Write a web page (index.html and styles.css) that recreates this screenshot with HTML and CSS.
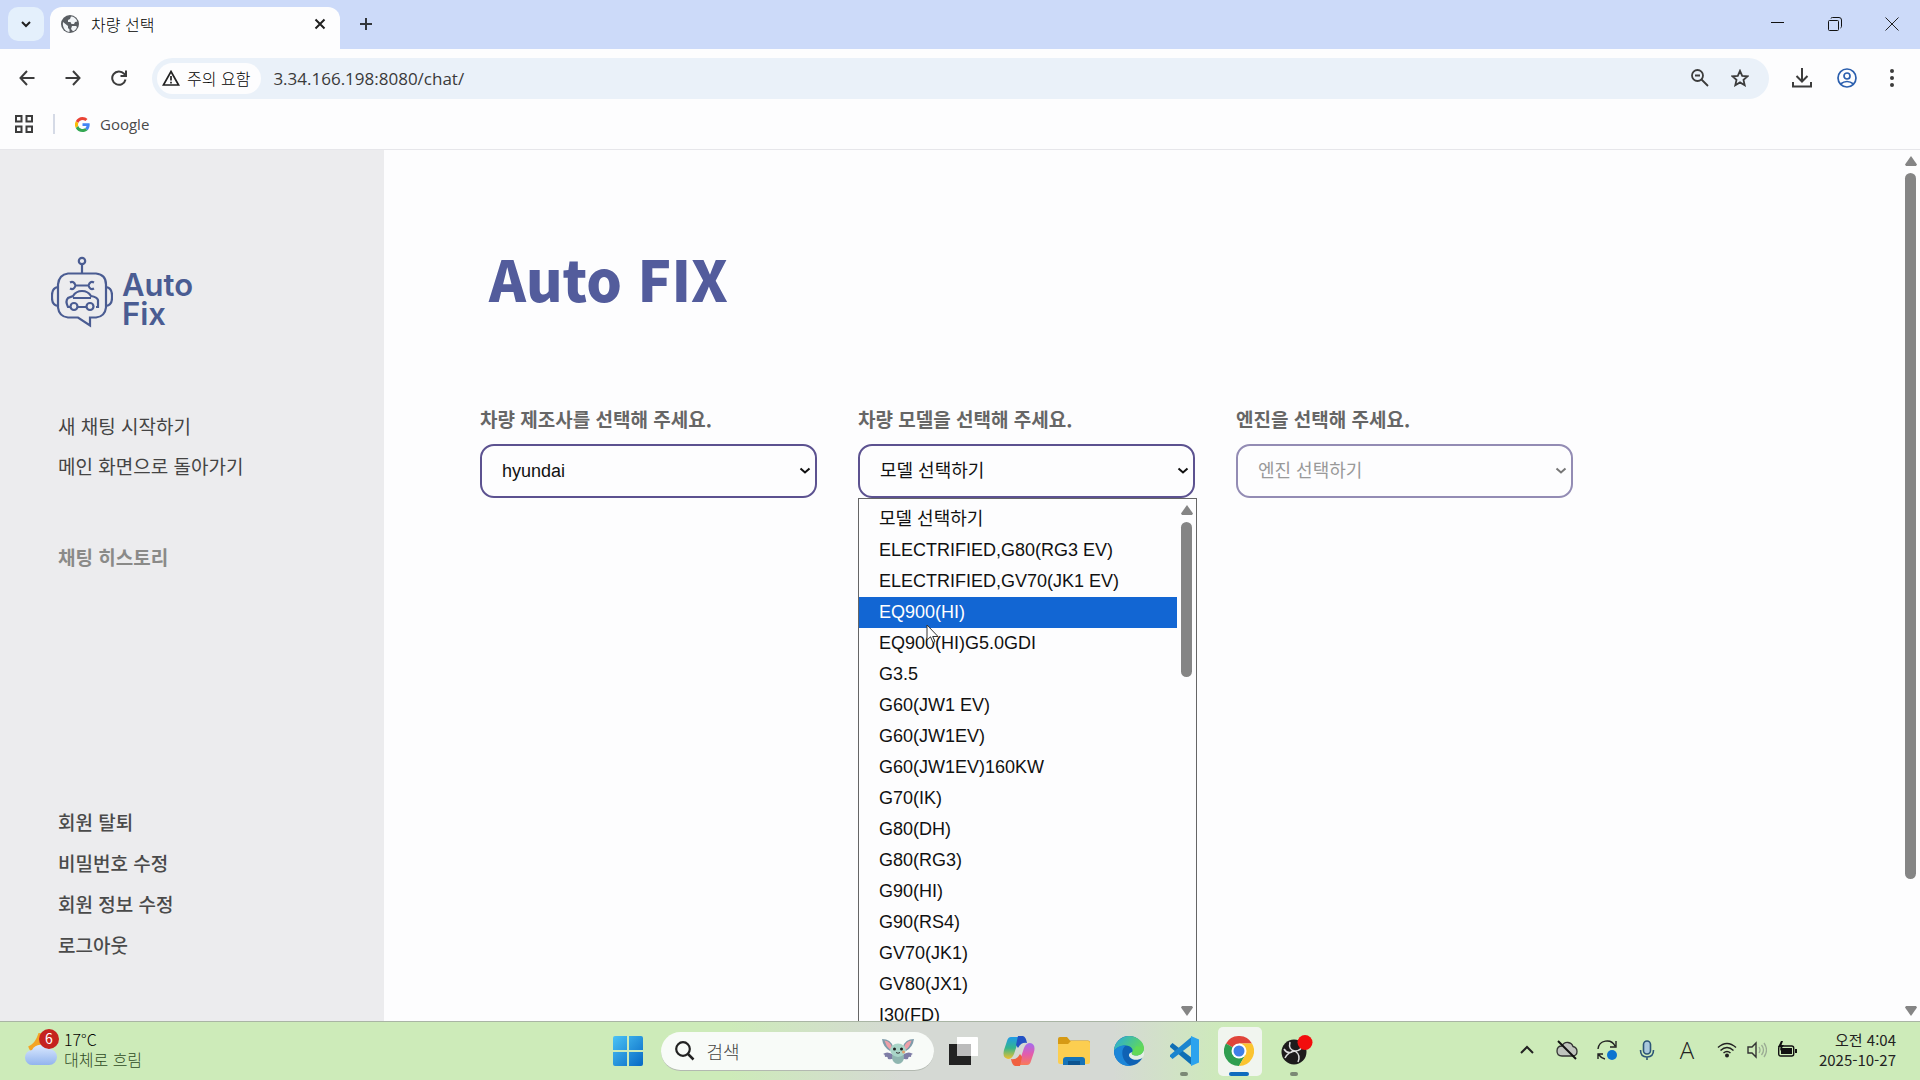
FILE: index.html
```html
<!DOCTYPE html>
<html lang="ko">
<head>
<meta charset="utf-8">
<title>차량 선택</title>
<link rel="stylesheet" href="styles.css">
</head>
<body>
<header class="browser">
  <div class="tabstrip">
    <button class="tab-search" aria-label="탭 검색"><svg width="12" height="12" viewBox="0 0 12 12"><path d="M2 4l4 4 4-4" fill="none" stroke="#202020" stroke-width="2"/></svg></button>
    <div class="tab">
      <svg width="18" height="18" viewBox="0 0 18 18"><circle cx="9" cy="9" r="9" fill="#5a5e63"/><path d="M2 7l5 4v2l1.500 1.500V17C5 17 1 13 2 7zM10 1.500c3 0 5.500 2 6.300 5l-2.300.5-1 2h-2.500l-1-2H7V5l2-1zM11 11h4l1 1c-1 2.500-2.500 3.800-4 4.200L10 14z" fill="#f2f5f8"/></svg>
      <span class="tab-title">차량 선택</span>
      <button class="plain" aria-label="탭 닫기"><svg width="12" height="12" viewBox="0 0 12 12"><path d="M1.500 1.500l9 9M10.500 1.500l-9 9" stroke="#202020" stroke-width="2"/></svg></button>
    </div>
    <button class="plain new-tab" aria-label="새 탭"><svg width="14" height="14" viewBox="0 0 14 14"><path d="M7 1v12M1 7h12" stroke="#33373c" stroke-width="2"/></svg></button>
    <div class="window-buttons">
      <button aria-label="최소화"><svg width="14" height="14" viewBox="0 0 14 14"><path d="M0 5.500h13" stroke="#111"/></svg></button>
      <button aria-label="이전 크기로"><svg width="14" height="14" viewBox="0 0 14 14"><g fill="none" stroke="#111"><rect x=".5" y="3.500" width="10" height="10" rx="1"/><path d="M3 1.500Q3 .5 4.500 .5H11q2.500 0 2.500 2.500v6.500q0 1-1 1.500"/></g></svg></button>
      <button aria-label="닫기"><svg width="14" height="14" viewBox="0 0 14 14"><path d="M.5.5l13 13M13.500.5l-13 13" stroke="#222"/></svg></button>
    </div>
  </div>
  <div class="toolbar">
    <button class="nav" aria-label="뒤로"><svg width="16" height="16" viewBox="0 0 16 16"><path d="M15.500 8H2M8 1L1.500 8 8 15" class="ln"/></svg></button>
    <button class="nav" aria-label="앞으로"><svg width="16" height="16" viewBox="0 0 16 16"><path d="M.5 8H14M8 1l6.500 7L8 15" class="ln"/></svg></button>
    <button class="nav" aria-label="새로고침"><svg width="16" height="16" viewBox="0 0 16 16"><path d="M14.500 9.500A6.700 6.700 0 1 1 13 3.700L15 6M15 .5V6H9.500" class="ln"/></svg></button>
    <div class="omnibox">
      <button class="chip"><svg width="18" height="16" viewBox="0 0 18 16"><path d="M9 1.500L16.600 15H1.400z" fill="none" stroke="#222" stroke-width="1.700"/><path d="M9 6v4.500M9 11.800v1.700" stroke="#222" stroke-width="1.700"/></svg>주의 요함</button>
      <input class="address" type="text" aria-label="주소" value="3.34.166.198:8080/chat/">
      <button class="plain" aria-label="확대/축소"><svg width="18" height="18" viewBox="0 0 18 18"><circle cx="6.500" cy="6.500" r="5.500" class="ln thin"/><path d="M4 6.500h5M10.500 10.500l6.500 6.500" class="ln thin"/></svg></button>
      <button class="plain" aria-label="북마크"><svg width="18" height="18" viewBox="0 0 18 18"><path d="M9 1.800l2.200 5 5.400.5-4.100 3.600 1.200 5.300L9 13.400l-4.700 2.800 1.200-5.300L1.400 7.300l5.400-.5z" class="ln thin"/></svg></button>
    </div>
    <div class="tools">
      <button class="plain" aria-label="다운로드"><svg width="20" height="20" viewBox="0 0 20 20"><path d="M10 0v13M4.500 8l5.500 5.500L15.500 8M1 14v4.500h18V14" class="ln"/></svg></button>
      <button class="plain" aria-label="프로필"><svg width="20" height="20" viewBox="0 0 20 20"><g fill="none" stroke="#2b5fae" stroke-width="1.700"><circle cx="10" cy="10" r="9"/><circle cx="10" cy="8" r="3"/><path d="M3.500 16q6.500-5 13 0"/></g></svg></button>
      <button class="plain" aria-label="메뉴"><svg width="20" height="20" viewBox="0 0 20 20"><g fill="#3c3c3c"><circle cx="10" cy="3" r="2"/><circle cx="10" cy="10" r="2"/><circle cx="10" cy="17" r="2"/></g></svg></button>
    </div>
  </div>
  <nav class="bookmarks">
    <button class="plain" aria-label="앱"><svg width="18" height="18" viewBox="0 0 18 18"><path d="M1 1h5.500v5.500H1zM11.500 1H17v5.500h-5.500zM1 11.500h5.500V17H1zM11.500 11.500H17V17h-5.500z" class="ln"/></svg></button>
    <span class="divider"></span>
    <a class="bookmark" href="#"><svg width="15" height="15" viewBox="0 0 48 48"><path fill="#ea4335" d="M24 9.500c3.500 0 6.700 1.200 9.200 3.600l6.900-6.900C35.900 2.400 30.500 0 24 0 14.600 0 6.500 5.400 2.600 13.200l8 6.200C12.400 13.700 17.700 9.500 24 9.500z"/><path fill="#4285f4" d="M47 24.600c0-1.600-.2-3.100-.4-4.600H24v9h12.900c-.6 3-2.300 5.500-4.800 7.200l7.700 6C44.400 38 47 31.800 47 24.600z"/><path fill="#fbbc05" d="M10.500 28.600a14.500 14.500 0 0 1 0-9.200l-8-6.200a24 24 0 0 0 0 21.600z"/><path fill="#34a853" d="M24 48c6.500 0 11.900-2.100 15.900-5.800l-7.700-6A14.500 14.500 0 0 1 10.500 28.600l-8 6.200C6.500 42.600 14.600 48 24 48z"/></svg>Google</a>
  </nav>
</header>

<div class="page">
  <aside class="sidebar">
    <a class="logo" href="#">
      <svg width="62" height="72" viewBox="0 0 62 72" fill="none" stroke="#4a5c92" stroke-width="2.200">
        <circle cx="31" cy="5" r="3.200"/><path d="M31 8.500V17"/>
        <path d="M17 17.500h28q10 1 10 11v23q-1 9-10 10h-6v8L27 61.500H17q-9-1-10-10v-23q1-10 10-11z"/>
        <path d="M7 31q-6 1-6 8v3q0 7 6 8M55 31q6 1 6 8v3q0 7-6 8"/>
        <path d="M24 29.500h14M19 26.500q4-2 5.500 3-1.500 5-5.500 3M43 26.500q-4-2-5.500 3 1.500 5 5.500 3"/>
        <path d="M19 51h-2q-3-6 0-9l5-2q3-5 9-5t9 5q6 1 7 4v7h-2M27 51h8M22 42h18"/>
        <circle cx="23" cy="50.500" r="3.500"/><circle cx="39" cy="50.500" r="3.500"/>
      </svg>
      <span class="logo-text">Auto<br>Fix</span>
    </a>
    <nav class="menu">
      <a href="#">새 채팅 시작하기</a>
      <a href="#">메인 화면으로 돌아가기</a>
    </nav>
    <h2 class="history">채팅 히스토리</h2>
    <nav class="account">
      <a href="#">회원 탈퇴</a>
      <a href="#">비밀번호 수정</a>
      <a href="#">회원 정보 수정</a>
      <a href="#">로그아웃</a>
    </nav>
  </aside>
  <main class="main">
    <h1 class="title">Auto FIX</h1>
    <form class="fields">
      <div class="field">
        <label for="maker">차량 제조사를 선택해 주세요.</label>
        <div class="select-box">
          <select id="maker"><option>hyundai</option></select>
          <svg class="caret" width="12" height="8" viewBox="0 0 12 8"><path d="M1.500 1.500L6 5.500l4.500-4" fill="none" stroke="#111" stroke-width="2"/></svg>
        </div>
      </div>
      <div class="field">
        <label for="model">차량 모델을 선택해 주세요.</label>
        <div class="select-box">
          <select id="model"><option>모델 선택하기</option></select>
          <svg class="caret" width="12" height="8" viewBox="0 0 12 8"><path d="M1.500 1.500L6 5.500l4.500-4" fill="none" stroke="#111" stroke-width="2"/></svg>
          <div class="popup">
            <ul class="options" role="listbox" aria-label="모델">
              <li>모델 선택하기</li>
              <li>ELECTRIFIED,G80(RG3 EV)</li>
              <li>ELECTRIFIED,GV70(JK1 EV)</li>
              <li class="active">EQ900(HI)<svg class="cursor" width="14" height="20" viewBox="0 0 14 20"><path d="M1 1v15l3.500-3.200L7 18.500l2-1-2.300-5H12z" fill="#fff" stroke="#333"/></svg></li>
              <li>EQ900(HI)G5.0GDI</li>
              <li>G3.5</li>
              <li>G60(JW1 EV)</li>
              <li>G60(JW1EV)</li>
              <li>G60(JW1EV)160KW</li>
              <li>G70(IK)</li>
              <li>G80(DH)</li>
              <li>G80(RG3)</li>
              <li>G90(HI)</li>
              <li>G90(RS4)</li>
              <li>GV70(JK1)</li>
              <li>GV80(JX1)</li>
              <li>I30(FD)</li>
            </ul>
            <div class="scroll">
              <svg width="12" height="10" viewBox="0 0 12 10"><path d="M6 0l6 8.500-1 1.500H1L0 8.500z" fill="#858585"/></svg>
              <span class="thumb short"></span>
              <svg class="down" width="12" height="10" viewBox="0 0 12 10"><path d="M6 10L0 1.500 1 0h10l1 1.500z" fill="#858585"/></svg>
            </div>
          </div>
        </div>
      </div>
      <div class="field">
        <label for="engine">엔진을 선택해 주세요.</label>
        <div class="select-box disabled">
          <select id="engine" disabled><option>엔진 선택하기</option></select>
          <svg class="caret" width="12" height="8" viewBox="0 0 12 8"><path d="M1.500 1.500L6 5.500l4.500-4" fill="none" stroke="#777" stroke-width="2"/></svg>
        </div>
      </div>
    </form>
  </main>
  <div class="scroll page-scroll">
    <svg width="12" height="10" viewBox="0 0 12 10"><path d="M6 0l6 8.500-1 1.500H1L0 8.500z" fill="#858585"/></svg>
    <span class="thumb long"></span>
    <svg class="down" width="12" height="10" viewBox="0 0 12 10"><path d="M6 10L0 1.500 1 0h10l1 1.500z" fill="#858585"/></svg>
  </div>
</div>

<footer class="taskbar">
  <button class="weather">
    <svg width="36" height="40" viewBox="0 0 36 40">
      <defs><linearGradient id="cl" x2="0" y2="1"><stop stop-color="#dceaff"/><stop offset="1" stop-color="#92b4ee"/></linearGradient></defs>
      <circle cx="15" cy="15" r="11" fill="#f3a526"/><path d="M0 18q11 0 15-16L4 0 0 8z" fill="#cdebb9"/>
      <path d="M9 36a7.500 7.500 0 0 1-1-15 10 10 0 0 1 17-1 8 8 0 0 1 0 16z" fill="url(#cl)"/>
      <circle cx="25" cy="10" r="10" fill="#c5221f"/><text x="25" y="15" text-anchor="middle" class="badge">6</text>
    </svg>
    <span class="weather-text"><span>17°C</span><span class="muted">대체로 흐림</span></span>
  </button>

  <div class="apps">
    <button class="app" aria-label="시작"><svg width="30" height="30" viewBox="0 0 30 30"><defs><linearGradient id="wn" x2="1" y2="1"><stop stop-color="#4cc3f5"/><stop offset="1" stop-color="#0568c4"/></linearGradient></defs><path d="M2 0h12v14H0V2q0-2 2-2zM16 0h12q2 0 2 2v12H16zM0 16h14v14H2q-2 0-2-2zM16 16h14v12q0 2-2 2H16z" fill="url(#wn)"/></svg></button>
    <div class="search">
      <svg width="20" height="20" viewBox="0 0 20 20"><circle cx="8" cy="8" r="6.800" fill="none" stroke="#222" stroke-width="2.200"/><path d="M13 13l5.500 5.500" stroke="#222" stroke-width="2.500"/></svg>
      <input type="search" aria-label="검색" placeholder="검색">
      <svg width="32" height="28" viewBox="0 0 32 28">
        <path d="M0 2q9 0 11 8l-3 4Q1 10 0 2zM32 2q-9 0-11 8l3 4q7-4 8-12z" fill="#7f9cab"/><path d="M2.500 3.500q6 1 7.500 7l-2 2Q4 9 2.500 3.500zM29.500 3.500q-6 1-7.500 7l2 2q4-3 5.500-9z" fill="#ef9fa8"/>
        <path d="M10 17q-5-3-9 0 2 0 2 3 3-1 3 2 5 1 7-2zM22 17q5-3 9 0-2 0-2 3-3-1-3 2-5 1-7-2z" fill="#7e7da6"/>
        <ellipse cx="16" cy="20" rx="6" ry="7" fill="#8fb6b0"/><path d="M8 13q1-6 8-6.500 7 .5 8 6.500-1 6-8 7-7-1-8-7z" fill="#a9d5c8"/>
        <circle cx="12.500" cy="12" r="1.500" fill="#222"/><circle cx="19.500" cy="12" r="1.500" fill="#222"/><path d="M14 15.500q2 1.500 4 0" stroke="#333" fill="none"/><circle cx="21.500" cy="15" r="1.500" fill="#e2a16f"/>
      </svg>
    </div>
    <button class="app" aria-label="작업 보기"><svg width="30" height="30" viewBox="0 0 30 30"><path d="M8 1h20q1 0 1 1v18H8z" fill="#fff"/><path d="M0 8h22v21H0z" fill="#222"/><path d="M8 8h14v12H8z" fill="#bcbcbc"/></svg></button>
    <button class="app" aria-label="Copilot"><svg width="32" height="30" viewBox="0 0 32 30"><defs><linearGradient id="c1" x2="0" y2="1"><stop stop-color="#1f9be8"/><stop offset=".5" stop-color="#35b58c"/><stop offset="1" stop-color="#f2c12e"/></linearGradient><linearGradient id="c2" x2="0" y2="1"><stop stop-color="#a36df0"/><stop offset=".5" stop-color="#e25cae"/><stop offset="1" stop-color="#f97a58"/></linearGradient></defs>
      <path d="M8 1h13q-5 1-7 8l-3 9q-2 5-6 5-6-1-4-9l3-9q1-4 4-4z" fill="url(#c1)"/><path d="M24 29H11q5-1 7-8l3-9q2-5 6-5 6 1 4 9l-3 9q-1 4-4 4z" fill="url(#c2)"/><path d="M15 0h5q3 1 4 7-6-1-9 5l-2-3z" fill="#2352c4"/><path d="M17 30h-5q-3-1-4-7 6 1 9-5l2 3z" fill="#f0603f"/></svg></button>
    <button class="app" aria-label="파일 탐색기"><svg width="32" height="28" viewBox="0 0 32 28"><path d="M0 2q0-2 2-2h7l3 3.500h18q2 0 2 2V12H0z" fill="#d69a14"/><path d="M0 7h10l3-3h17q2 0 2 2v19q0 2-2 2H2q-2 0-2-2z" fill="#fcce50"/><path d="M5 28v-5q0-3 3-3h16q3 0 3 3v5z" fill="#1673b8"/><path d="M10 24h12v4H10z" fill="#0b5390"/></svg></button>
    <button class="app" aria-label="Edge"><svg width="30" height="30" viewBox="0 0 30 30"><defs><linearGradient id="e1" y2=".5"><stop stop-color="#28a9e0"/><stop offset="1" stop-color="#62d957"/></linearGradient></defs><circle cx="15" cy="15" r="15" fill="#0f62b4"/><path d="M0 15C0 7 7 0 15 0s15 6 15 12c0 5-4 7.500-8 7.500-3 0-5-1-4-3 2-3-1-7-6-7C6 9.500 2 12 0 15z" fill="url(#e1)"/><path d="M0 15c2-4 7-6 12-5.500C6 13 7 25 17 29.900 8 31 0 24 0 15z" fill="#1c86d8"/><path d="M18 16c-3 1-4 3-2 5.500 3 3 8 3 12.500.5l-.8 1.500 2.300-4V12c0 5-4 7.500-8 7.500-3 0-5-1-4-3.500z" fill="#e4efe4"/><path d="M30 12c0 5-4 7.500-8 7.500-2 0-4-.7-4.200-2L22 10z" fill="#62d957"/></svg></button>
    <button class="app running" aria-label="Visual Studio Code"><svg width="30" height="30" viewBox="0 0 30 30"><path d="M1 9.500L3.500 7 23 22v7.500L1 11z" fill="#0f6fb5"/><path d="M1 20.500L3.500 23 23 8V.5L1 19z" fill="#1a85cf"/><path d="M22 0l8 3.500v23L22 30z" fill="#2ba3ee"/></svg></button>
    <button class="app running current" aria-label="Chrome"><svg width="30" height="30" viewBox="0 0 30 30"><path d="M15 15L2 7.500A15 15 0 0 1 28 7.500H15z" fill="#e0453a"/><path d="M15 15L2 7.500A15 15 0 0 0 15 30l6.500-11.200z" fill="#2f9e4f"/><path d="M15 7.500h13A15 15 0 0 1 15 30l6.500-11.200z" fill="#fbc42f"/><circle cx="15" cy="15" r="7.500" fill="#fff"/><circle cx="15" cy="15" r="5.500" fill="#3f7fe8"/></svg></button>
    <button class="app running" aria-label="OBS"><svg width="38" height="32" viewBox="-5 1 38 32"><circle cx="14" cy="18" r="12.500" fill="#1d1b1c"/><g fill="none" stroke="#ddd" stroke-width="1.500"><path d="M10 8q-2 8 5 9 6 0 8-6M15 17q-7 1-10 7M15 17q6 4 3 11M4 15q3 5 8 3"/></g><circle cx="25" cy="8.500" r="7.500" fill="#f20d0d"/></svg></button>
  </div>

  <div class="tray">
    <svg width="30" height="30" viewBox="0 0 30 30"><path d="M9 18l6-6 6 6" fill="none" stroke="#222" stroke-width="2"/></svg>
    <svg width="30" height="30" viewBox="0 0 30 30"><path d="M10 21q-5 0-5-5t5-5q2-4 6-3.500 4 .5 5 4 4 1 4 5t-4 4.500z" fill="#bfc4bd" stroke="#333" stroke-width="1.300"/><path d="M6 6l18 18" stroke="#111" stroke-width="2"/></svg>
    <svg width="30" height="30" viewBox="0 0 30 30"><path d="M6 14a9 9 0 0 1 17-3M24 6v6h-6M6 24v-5h5M6 19q3 4 7 5" fill="none" stroke="#222" stroke-width="1.400"/><circle cx="20" cy="20" r="5" fill="#0b74d0"/></svg>
    <svg width="30" height="30" viewBox="0 0 30 30"><g fill="none" stroke="#2c5577" stroke-width="1.600"><rect x="11.500" y="6" width="7" height="13" rx="3.500" fill="#a9c8dc"/><path d="M8.500 15q0 7 6.500 7t6.500-7M15 22v3"/></g></svg>
    <span class="ime">A</span>
    <div class="status">
      <svg width="20" height="20" viewBox="0 0 20 20"><g fill="none" stroke="#222" stroke-width="1.500"><path d="M1 7.500q9-8 18 0M3.500 10.500q6.500-6 13 0M6.500 13q3.500-3 7 0"/></g><circle cx="10" cy="15.500" r="2" fill="#222"/></svg>
      <svg width="20" height="20" viewBox="0 0 20 20"><path d="M1 7h4l4-4v14l-4-4H1z" fill="none" stroke="#333" stroke-width="1.400"/><path d="M12 7q2 3 0 6M14.500 5q4 5 0 10M17 3q5 7 0 14" fill="none" stroke="#9bab94" stroke-width="1.300"/></svg>
      <svg width="20" height="20" viewBox="0 0 20 20"><rect x="1.700" y="6" width="15" height="10" rx="2" fill="none" stroke="#111" stroke-width="1.400"/><path d="M4 8h11v6H4zM18 9h2v4h-2z" fill="#111"/><path d="M4 1L1 7h2.500L3 11l4-6H4.500L6 1z" fill="#111"/></svg>
    </div>
    <time class="clock"><span>오전 4:04</span><span>2025-10-27</span></time>
  </div>
</footer>
</body>
</html>
```
FILE: styles.css
```css
* { box-sizing: border-box; }
html, body { height: 100%; }
body {
  margin: 0;
  display: flex;
  flex-direction: column;
  overflow: hidden;
  background: #fdfdfe;
  color: #222;
  font-family: "Noto Sans CJK KR", sans-serif;
}
button, input, select { font: inherit; color: inherit; }
button { border: 0; padding: 0; background: none; display: flex; align-items: center; justify-content: center; }
input { border: 0; padding: 0; background: none; outline: 0; min-width: 0; }
a { color: inherit; text-decoration: none; }
svg { display: block; flex: none; }
.ln { fill: none; stroke: #3c3c3c; stroke-width: 2; }
.thin { stroke-width: 1.8; }

/* Browser frame */
.browser { flex: none; border-bottom: 1px solid #e6e6ea; }
.tabstrip { display: flex; height: 49px; background: #ccdaf9; }
.tab-search { width: 36px; height: 34px; margin: 7px 6px 0 8px; border-radius: 10px; background: #e4f0fc; }
.tab {
  display: flex;
  align-items: center;
  gap: 12px;
  width: 290px;
  height: 42px;
  margin-top: 7px;
  padding: 0 14px 8px 11px;
  border-radius: 12px 12px 0 0;
  background: #fdfdfe;
}
.tab-title { flex: 1; font-size: 16px; line-height: 24px; font-weight: 300; color: #000; }
.new-tab { width: 52px; height: 48px; }
.window-buttons { display: flex; margin-left: auto; }
.window-buttons button { width: 57px; height: 48px; }
.toolbar { display: flex; align-items: center; height: 58px; padding: 0 18px 0 4px; }
.nav { width: 46px; height: 40px; }
.omnibox {
  flex: 1;
  display: flex;
  align-items: center;
  gap: 22px;
  height: 41px;
  margin-left: 10px;
  padding: 0 20px 0 5px;
  border-radius: 21px;
  background: #eaf1f9;
}
.chip { gap: 7px; height: 31px; padding: 0 11px 0 5px; border-radius: 16px; background: #fdfdfe; font-size: 16px; font-weight: 300; color: #000; margin-right: -10px; }
.address { flex: 1; font-family: "Open Sans", sans-serif; font-size: 17px; color: #3a3a3a; }
.tools { display: flex; gap: 25px; margin-left: 23px; }
.bookmarks { display: flex; align-items: center; height: 42px; padding: 0 15px 8px; gap: 20px; }
.divider { width: 2px; height: 20px; background: #d5dae6; }
.bookmark { display: flex; align-items: center; gap: 10px; font: 15px/20px "Open Sans", sans-serif; color: #4a4a4a; }

/* Page */
.page { flex: 1; display: flex; min-height: 0; overflow: hidden; }
.sidebar {
  width: 20%;
  display: flex;
  flex-direction: column;
  padding: 106px 16px 56px 51px;
  background: #ececee;
  font-size: 19px;
  line-height: 41px;
}
.logo { display: flex; gap: 9px; color: #4a5c92; }
.logo-text { padding-top: 14px; font: 600 31px/29px "Inter", sans-serif; }
.menu { display: flex; flex-direction: column; margin: 78px 0 50px 7px; line-height: 40px; color: #444; }
.history { margin: 0 0 0 7px; font-size: 19px; line-height: 41px; font-weight: 700; color: #8a8a88; }
.account { display: flex; flex-direction: column; margin: auto 0 0 7px; font-weight: 500; color: #4a4a4a; }
.main { flex: 1; padding: 88px 40px 0 96px; }
.title { margin: 0 0 87px 9px; font-size: 56px; line-height: 80px; font-weight: 900; color: #535c9c; }
.fields { display: grid; grid-template-columns: repeat(3, 1fr); gap: 41px; max-width: 1093px; }
.field label { display: block; margin-bottom: 11px; font-size: 19px; line-height: 28px; font-weight: 700; color: #666; }
.select-box { position: relative; font-family: "Liberation Sans", "Noto Sans CJK KR", sans-serif; font-size: 18px; }
.select-box select {
  display: block;
  width: 100%;
  height: 54px;
  padding: 0 36px 0 20px;
  border: 2px solid #5c5290;
  border-radius: 14px;
  appearance: none;
  background: #fdfdfe;
  color: #111;
}
.select-box.disabled select { border-color: #938cb4; color: #999; opacity: 1; }
.caret { position: absolute; right: 6px; top: 23px; pointer-events: none; }
.popup {
  position: absolute;
  top: 54px;
  left: 0;
  width: calc(100% + 2px);
  height: 524px;
  display: flex;
  border: 1px solid #666;
  background: #fdfdfe;
  color: #111;
  overflow: hidden;
}
.options { flex: 1; margin: 0; padding: 5px 0 0; list-style: none; line-height: 31px; }
.options li { position: relative; height: 31px; padding-left: 20px; }
.options .active { background: #1266d3; color: #fff; }
.cursor { position: absolute; left: 67px; top: 27px; z-index: 1; }
.scroll { display: flex; flex-direction: column; align-items: center; width: 19px; padding: 6px 0 5px; gap: 7px; }
.thumb { width: 11px; border-radius: 6px; background: #858585; }
.short { height: 155px; }
.long { flex: 0 1 706px; }
.down { margin-top: auto; }

/* Taskbar */
.taskbar {
  flex: none;
  display: grid;
  grid-template-columns: 1fr auto 1fr;
  height: 59px;
  border-top: 1px solid #a9b5a4;
  background: linear-gradient(90deg, #cdebb9 0%, #cdebb9 38%, #d5d9d4 47%, #d5d9d4 58%, #cdebb9 64%, #cdebb9 100%);
}
.weather { justify-self: start; gap: 4px; padding: 0 0 4px 24px; font-size: 16px; line-height: 20px; }
.weather-text, .clock { display: flex; flex-direction: column; text-align: left; }
.weather-text { font-weight: 300; color: #000; }
.weather-text .muted { color: #2f4a25; }
.badge { fill: #fff; font-size: 14px; }
.apps { display: flex; align-items: center; padding-left: 2px; }
.app { position: relative; width: 55px; height: 58px; }
.search {
  display: flex;
  align-items: center;
  gap: 12px;
  width: 273px;
  height: 39px;
  margin: 0 3px 0 5px;
  padding: 0 20px 0 14px;
  border-radius: 20px;
  background: #f8fbf8;
  border-bottom: 1px solid #b3b9b1;
}
.search input { flex: 1; font-size: 18px; font-weight: 300; }
.search input::placeholder { color: #444; opacity: 1; }
.running::after { content: ""; position: absolute; bottom: 4px; width: 8px; height: 4px; border-radius: 2px; background: #7b8875; }
.current::before { content: ""; position: absolute; inset: 5px 5px 4px 6px; border-radius: 5px; background: #f1f5ef; }
.current svg { position: relative; }
.current::after { width: 20px; background: #0f6cbd; }
.tray { justify-self: end; display: flex; align-items: center; gap: 10px; padding: 0 24px 2px 0; }
.ime { width: 30px; text-align: center; font: 300 24px/30px "Open Sans", sans-serif; }
.status { display: flex; gap: 10px; margin: 0 9px 0 5px; }
.clock { width: 80px; font-size: 15px; line-height: 20px; text-align: right; }
```
